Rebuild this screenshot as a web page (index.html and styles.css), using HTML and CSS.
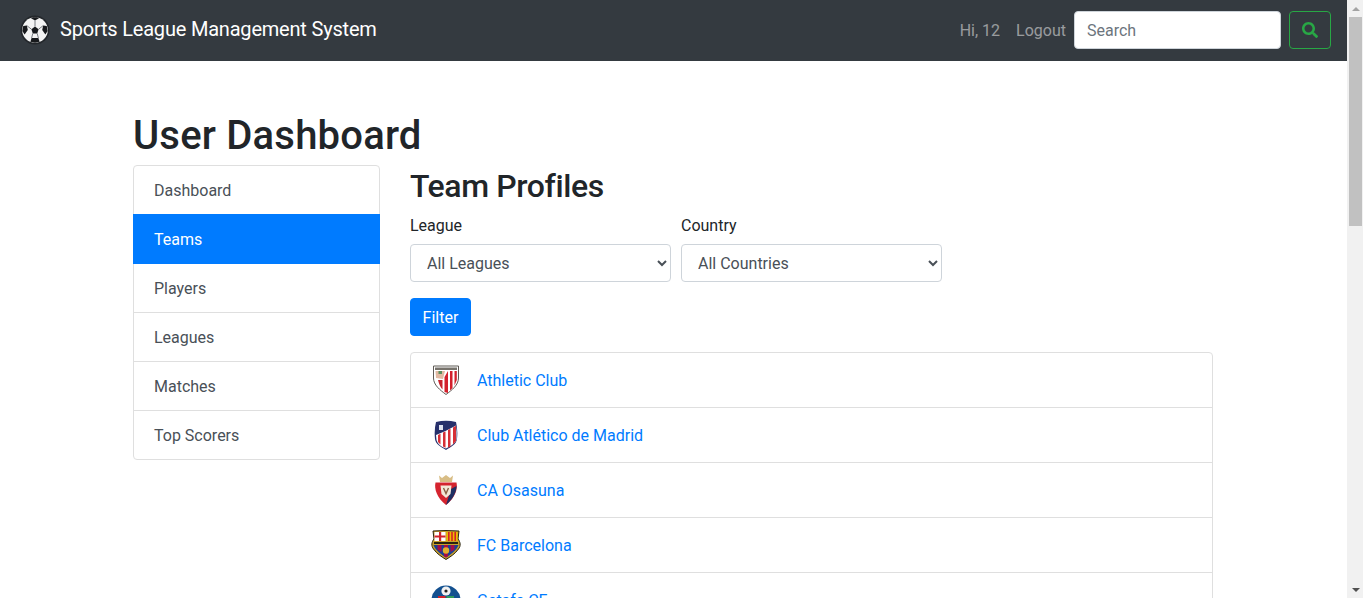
FILE: index.html
```html
<!DOCTYPE html>
<html lang="en">
<head>
  <meta charset="UTF-8">
  <title>Sports League Management System</title>
  <link rel="stylesheet" href="styles.css">
</head>
<body>

<div class="page">
  <nav class="navbar">
    <a class="brand" href="#">
      <svg class="brand-logo" viewBox="0 0 30 30">
        <circle cx="15" cy="15" r="14.5" fill="#23272b"/>
        <circle cx="15" cy="15" r="12.8" fill="#f4f4f4"/>
        <polygon points="15,11.5 18.6,14.2 17.2,18.4 12.8,18.4 11.4,14.2" fill="#17191c"/>
        <path d="M11 3.2 L15 5.4 L19 3.2 L17 2.2 L13 2.2 Z" fill="#17191c"/>
        <path d="M3.2 11 L6.8 10.6 L7.8 15 L4.6 19.5 L2.4 16 Z" fill="#17191c"/>
        <path d="M26.8 11 L23.2 10.6 L22.2 15 L25.4 19.5 L27.6 16 Z" fill="#17191c"/>
        <path d="M10.4 26.8 L11.6 23 L18.4 23 L19.6 26.8 L15 27.8 Z" fill="#17191c"/>
        <path d="M15 5.4 V11.5 M6.8 10.6 L11.4 14.2 M23.2 10.6 L18.6 14.2 M12.8 18.4 L11.6 23 M17.2 18.4 L18.4 23" stroke="#6a6e74" stroke-width="0.9"/>
      </svg>
      <span class="brand-name">Sports League Management System</span>
    </a>
    <div class="nav-right">
      <span class="nav-link">Hi, 12</span>
      <a class="nav-link" href="#">Logout</a>
      <form class="search">
        <input class="search-input" type="text" placeholder="Search">
        <button class="search-btn" type="button">
          <svg width="16" height="16" viewBox="0 0 512 512"><path fill="#28a745" d="M505 442.7L405.3 343c-4.5-4.5-10.6-7-17-7H372c27.6-35.3 44-79.7 44-128C416 93.1 322.9 0 208 0S0 93.1 0 208s93.1 208 208 208c48.3 0 92.7-16.4 128-44v16.3c0 6.4 2.5 12.5 7 17l99.7 99.7c9.4 9.4 24.6 9.4 33.9 0l28.3-28.3c9.4-9.4 9.4-24.6.1-34zM208 336c-70.7 0-128-57.2-128-128 0-70.7 57.2-128 128-128 70.7 0 128 57.2 128 128 0 70.7-57.2 128-128 128z"/></svg>
        </button>
      </form>
    </div>
  </nav>

  <div class="container">
    <h1 class="title">User Dashboard</h1>
    <div class="row">
      <div class="sidebar">
        <a class="side-item" href="#">Dashboard</a>
        <a class="side-item active" href="#">Teams</a>
        <a class="side-item" href="#">Players</a>
        <a class="side-item" href="#">Leagues</a>
        <a class="side-item" href="#">Matches</a>
        <a class="side-item" href="#">Top Scorers</a>
      </div>

      <div class="content">
        <h2 class="heading">Team Profiles</h2>
        <form>
          <div class="filters">
            <div class="field">
              <label class="field-label">League</label>
              <select class="select"><option>All Leagues</option></select>
            </div>
            <div class="field">
              <label class="field-label">Country</label>
              <select class="select"><option>All Countries</option></select>
            </div>
          </div>
          <button class="filter-btn" type="button">Filter</button>
        </form>

        <ul class="teams">
          <li class="team">
            <svg class="crest" viewBox="0 0 30 30">
              <path d="M2.5 1 H27.5 V13 C27.5 20 21 25 15 29.5 C9 25 2.5 20 2.5 13 Z" fill="#fff" stroke="#5f5a55" stroke-width="1"/>
              <path d="M4 2.5 H26 V5 H4 Z" fill="#77736c"/>
              <path d="M4.5 6 L14 6 L12 14 L5 13 Z" fill="#e2b9a2"/>
              <path d="M7.5 6 H11 V9 H7.5 Z" fill="#5d8f5f"/>
              <path d="M13.5 27 L13.5 12 L17 6 V28 Z M19 25.5 V6 H21.5 V23 Z M23.5 20.5 V6 H25.8 V15 Z" fill="#d3202c"/>
              <path d="M7 15 L11.5 15 V24.5 C9.5 22.5 8 19 7 15 Z" fill="#c9222c"/>
            </svg>
            <a class="team-link" href="#">Athletic Club</a>
          </li>
          <li class="team">
            <svg class="crest" viewBox="0 0 30 30">
              <path d="M5 2 Q15 -0.5 25 2 Q27 10 26 19 C25.5 24 20 27 15 30 C10 27 4.5 24 4 19 Q3 10 5 2 Z" fill="#27306b"/>
              <path d="M14.5 11 L25 5.5 Q26 12 25.5 19 C25 23 20 26 15 28.5 C11 27 7 25 5.5 20 L5 15 Z" fill="#fff"/>
              <path d="M7 15 L9.5 13.8 V24.5 L7 22 Z M12 12.6 L14.5 11.4 V27.8 L12 26.6 Z M17 10 L19.5 8.7 V26.6 L17 27.6 Z M22 7.4 L25 5.8 V21 L22 24.5 Z" fill="#d62f36"/>
              <path d="M8 5 H12 V10 H8 Z" fill="#dfe2ee"/>
            </svg>
            <a class="team-link" href="#">Club Atlético de Madrid</a>
          </li>
          <li class="team">
            <svg class="crest" viewBox="0 0 30 30">
              <path d="M8 0.5 L11 3 L15 0 L19 3 L22 0.5 L21 7 H9 Z" fill="#d8bd85"/>
              <path d="M4.5 7.5 H25.5 C27 14 24 23 15 30 C6 23 3 14 4.5 7.5 Z" fill="#d5242f"/>
              <path d="M20 14 L25.6 11 C25.5 17 22 24 15 30 Z" fill="#1f2f63"/>
              <path d="M9.5 10.5 H20.5 L19.5 19 L15 23 L10.5 19 Z" fill="#f3e8d8"/>
              <path d="M12.5 13 L15 18.5 L17.5 13" fill="none" stroke="#8a5f44" stroke-width="1.4"/>
            </svg>
            <a class="team-link" href="#">CA Osasuna</a>
          </li>
          <li class="team">
            <svg class="crest" viewBox="0 0 30 30">
              <path d="M2 1 L15 0.5 L28 1 L27 9 C29.5 12 30 16 27.5 19 C24 24 19 27 15 29.5 C11 27 6 24 2.5 19 C0 16 0.5 12 3 9 Z" fill="#c9a02c" stroke="#2a2410" stroke-width="1"/>
              <path d="M3.5 2 H14.5 V11 H3.5 Z" fill="#fff"/>
              <path d="M8 2 H10.2 V11 H8 Z M3.5 5.4 H14.5 V7.6 H3.5 Z" fill="#d2232a"/>
              <path d="M15.5 2 H26.5 V11 H15.5 Z" fill="#edbb00"/>
              <path d="M17 2 H18.6 V11 H17 Z M20.2 2 H21.8 V11 H20.2 Z M23.4 2 H25 V11 H23.4 Z" fill="#d2232a"/>
              <path d="M3 12 H27 V14 H3 Z" fill="#2a2410"/>
              <path d="M2.5 15 H27.5 C26 20 19 25 15 27.5 C11 25 4 20 2.5 15 Z" fill="#1a3f93"/>
              <path d="M6.5 15 H10.5 V22 L6.5 19.5 Z M13 15 H17 V26.2 L15 27.4 L13 26.2 Z M19.5 15 H23.5 V19.5 L19.5 22 Z" fill="#a50d46"/>
              <circle cx="15" cy="20.5" r="3.2" fill="#e3b02d"/>
            </svg>
            <a class="team-link" href="#">FC Barcelona</a>
          </li>
          <li class="team">
            <svg class="crest" viewBox="0 0 30 30">
              <circle cx="15" cy="15" r="14.5" fill="#13508f"/>
              <circle cx="15" cy="6" r="4.6" fill="#f2f2f2"/>
              <circle cx="15" cy="6" r="1.6" fill="#222"/>
              <path d="M7 11 H14.5 V20 H7 Z" fill="#d2232a"/>
              <path d="M15.5 11 H23 V20 H15.5 Z" fill="#2f9a5a"/>
            </svg>
            <a class="team-link" href="#">Getafe CF</a>
          </li>
        </ul>
      </div>
    </div>
  </div>
</div>

<div class="scrollbar">
  <div class="arrow-up"></div>
  <div class="thumb"></div>
  <div class="track"></div>
  <div class="arrow-down"></div>
</div>

</body>
</html>
```

FILE: styles.css
```css
* {
  box-sizing: border-box;
}
body {
  margin: 0;
  height: 100vh;
  overflow: hidden;
  display: flex;
  font-family: Roboto, "Noto Sans", sans-serif;
  font-size: 16px;
  line-height: 24px;
  color: #212529;
  background: #fff;
}
a {
  text-decoration: none;
}
.page {
  flex: 1;
  min-width: 0;
  overflow: hidden;
}
.navbar {
  height: 61px;
  padding: 0 16px 1px 20px;
  background: #343a40;
  display: flex;
  align-items: center;
  justify-content: space-between;
}
.brand {
  display: flex;
  align-items: center;
  gap: 10px;
  color: #fff;
  font-size: 20px;
}
.brand-name {
  padding-bottom: 2px;
  letter-spacing: -0.2px;
}
.brand-logo {
  width: 30px;
  height: 30px;
}
.nav-right {
  display: flex;
  align-items: center;
}
.nav-link {
  padding: 2px 8px 0;
  color: rgba(255,255,255,.5);
}
.search {
  display: flex;
  gap: 8px;
}
.search-input {
  width: 207px;
  height: 38px;
  padding: 6px 12px;
  border: 1px solid #ced4da;
  border-radius: 4px;
  font: inherit;
  color: #495057;
}
.search-input::placeholder {
  color: #6c757d;
}
.search-btn {
  width: 42px;
  height: 38px;
  padding: 0;
  background: transparent;
  border: 1px solid #28a745;
  border-radius: 4px;
  display: flex;
  align-items: center;
  justify-content: center;
}
.container {
  width: 1110px;
  margin: 0 118px;
  padding-top: 51px;
}
.title {
  margin: 0 15px 5px;
  font-size: 40px;
  font-weight: 500;
  line-height: 48px;
  letter-spacing: 0.2px;
}
.row {
  display: flex;
}
.sidebar {
  width: 247px;
  margin: 0 15px;
  flex-shrink: 0;
  align-self: flex-start;
}
.side-item {
  display: block;
  position: relative;
  height: 50px;
  margin-top: -1px;
  padding: 13px 20px 11px;
  color: #495057;
  border: 1px solid #dfdfdf;
}
.side-item:first-child {
  margin-top: 0;
  border-radius: 4px 4px 0 0;
}
.side-item:last-child {
  border-radius: 0 0 4px 4px;
}
.side-item.active {
  z-index: 1;
  background: #007bff;
  border-color: #007bff;
  color: #fff;
}
.content {
  flex: 1;
  min-width: 0;
  margin: 0 15px;
}
.heading {
  margin: 0 0 6px;
  padding-top: 2px;
  font-size: 32px;
  font-weight: 500;
  line-height: 38px;
  letter-spacing: -0.4px;
}
.filters {
  display: flex;
  gap: 10px;
  margin-bottom: 16px;
}
.field {
  width: 261px;
}
.field-label {
  display: block;
  margin-bottom: 6px;
  margin-top: 3px;
}
.select {
  width: 100%;
  height: 38px;
  padding: 6px 12px;
  background: #fff;
  border: 1px solid #ced4da;
  border-radius: 4px;
  font: inherit;
  color: #495057;
}
.filter-btn {
  display: block;
  width: 61px;
  height: 38px;
  padding: 2px 0 0;
  background: #007bff;
  border: 1px solid #007bff;
  border-radius: 4px;
  font: inherit;
  color: #fff;
}
.teams {
  list-style: none;
  margin: 16px 0 0;
  padding: 0;
}
.team {
  display: flex;
  align-items: center;
  height: 56px;
  margin-top: -1px;
  padding: 0 20px;
  border: 1px solid #dfdfdf;
}
.team:first-child {
  margin-top: 0;
  border-radius: 4px 4px 0 0;
}
.crest {
  width: 30px;
  height: 30px;
  margin-right: 16px;
}
.team-link {
  padding-top: 2px;
  color: #007bff;
}
.scrollbar {
  width: 16px;
  height: 100vh;
  flex-shrink: 0;
  background: #f1f1f1;
  display: flex;
  flex-direction: column;
  align-items: flex-end;
}
.arrow-up,
.arrow-down {
  width: 16px;
  height: 17px;
  flex-shrink: 0;
  position: relative;
}
.arrow-up::after,
.arrow-down::after {
  content: "";
  position: absolute;
  left: 5px;
  border-left: 4px solid transparent;
  border-right: 4px solid transparent;
}
.arrow-up::after {
  top: 7px;
  border-bottom: 4px solid #a3a3a3;
}
.arrow-down::after {
  bottom: 6px;
  border-top: 4px solid #505050;
}
.thumb {
  width: 13px;
  height: 209px;
  margin-right: 1px;
  background: #c1c1c1;
}
.track {
  flex: 1;
}
```
